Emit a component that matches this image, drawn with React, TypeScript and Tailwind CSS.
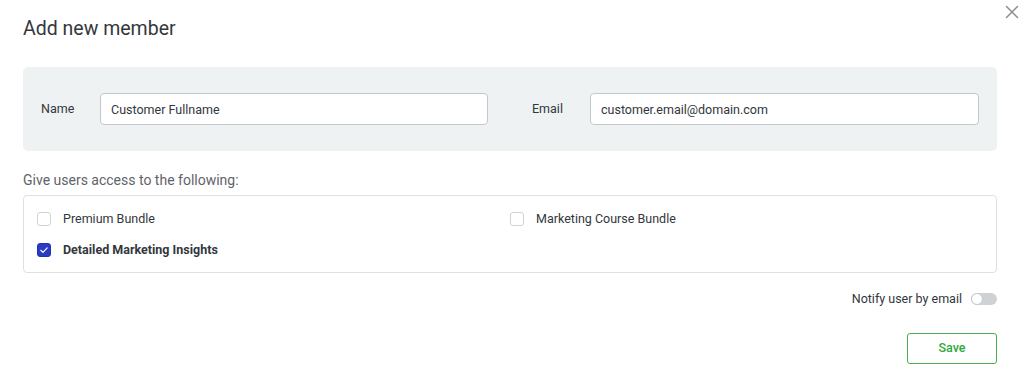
import React, { useState } from 'react'

const font = { fontFamily: 'Roboto, "Noto Sans", Arial, sans-serif' }

function Checkbox({ checked, label, onToggle }: { checked: boolean; label: string; onToggle: () => void }) {
  return (
    <label className="flex items-center h-[20px] cursor-pointer" onClick={onToggle}>
      {checked ? (
        <span className="w-[14px] h-[14px] rounded-[3px] bg-[#2a3cc2] border border-[#2233b0] flex items-center justify-center">
          <svg viewBox="0 0 12 12" className="w-[10px] h-[10px]">
            <path d="M2.2 6.3 L4.8 8.8 L9.8 3.4" fill="none" stroke="#fff" strokeWidth="1.4" strokeLinecap="round" strokeLinejoin="round" />
          </svg>
        </span>
      ) : (
        <span className="w-[14px] h-[14px] rounded-[3px] bg-white border border-[#cfd3d6]" />
      )}
      <span className={`ml-[12px] text-[12.5px] text-[#33373d] ${checked ? 'font-bold' : ''}`}>{label}</span>
    </label>
  )
}

export default function App() {
  const [items, setItems] = useState([
    { label: 'Premium Bundle', checked: false },
    { label: 'Marketing Course Bundle', checked: false },
    { label: 'Detailed Marketing Insights', checked: true },
  ])
  const [notify, setNotify] = useState(false)

  const toggle = (i: number) =>
    setItems(items.map((it, idx) => (idx === i ? { ...it, checked: !it.checked } : it)))

  return (
    <div className="relative w-full min-h-[379px] bg-white pl-[23px] pr-[26px] pt-[15px]" style={font}>
      <button className="absolute top-[5px] right-[4px] w-[14px] h-[14px] flex items-center justify-center">
        <svg viewBox="0 0 14 14" className="w-[14px] h-[14px]">
          <path d="M1.5 1.5 L12.5 12.5 M12.5 1.5 L1.5 12.5" stroke="#8a8d91" strokeWidth="1.5" strokeLinecap="round" />
        </svg>
      </button>

      <h1 className="text-[19.5px] leading-[28px] text-[#33373d] font-normal">Add new member</h1>

      <div className="mt-[24px] bg-[#eff2f3] rounded-[5px] px-[18px] py-[26px] grid grid-cols-2 gap-x-[44px]">
        <div className="flex items-center">
          <span className="w-[59px] text-[12.5px] text-[#33373d]">Name</span>
          <input
            defaultValue="Customer Fullname"
            className="flex-1 h-[32px] bg-white border border-[#c4c8cc] rounded-[4px] pl-[10px] text-[12.5px] text-[#33373d] outline-none"
          />
        </div>
        <div className="flex items-center">
          <span className="w-[58px] text-[12.5px] text-[#33373d]">Email</span>
          <input
            defaultValue="customer.email@domain.com"
            className="flex-1 h-[32px] bg-white border border-[#c4c8cc] rounded-[4px] pl-[10px] text-[12.5px] text-[#33373d] outline-none"
          />
        </div>
      </div>

      <p className="mt-[19px] text-[14px] leading-[20px] text-[#5f6368]">Give users access to the following:</p>

      <div className="mt-[5px] border border-[#dde1e4] rounded-[4px] px-[13px] pt-[13px] pb-[12px] grid grid-cols-2 gap-y-[11px]">
        {items.map((it, i) => (
          <Checkbox key={it.label} checked={it.checked} label={it.label} onToggle={() => toggle(i)} />
        ))}
      </div>

      <div className="mt-[17px] flex items-center justify-end">
        <span className="text-[12.5px] text-[#33373d]">Notify user by email</span>
        <button
          onClick={() => setNotify(!notify)}
          className={`ml-[9px] w-[26px] h-[12px] rounded-full flex items-center ${notify ? 'bg-[#2a3cc2] justify-end' : 'bg-[#cfd2d5] justify-start'}`}
        >
          <span className="w-[12px] h-[12px] rounded-full bg-white border border-[#c4c8cc]" />
        </button>
      </div>

      <div className="mt-[24px] flex justify-end">
        <button className="w-[90px] h-[31px] rounded-[3px] border border-[#47b04f] text-[#2ea83a] text-[12.5px] font-medium bg-white">
          Save
        </button>
      </div>
    </div>
  )
}
